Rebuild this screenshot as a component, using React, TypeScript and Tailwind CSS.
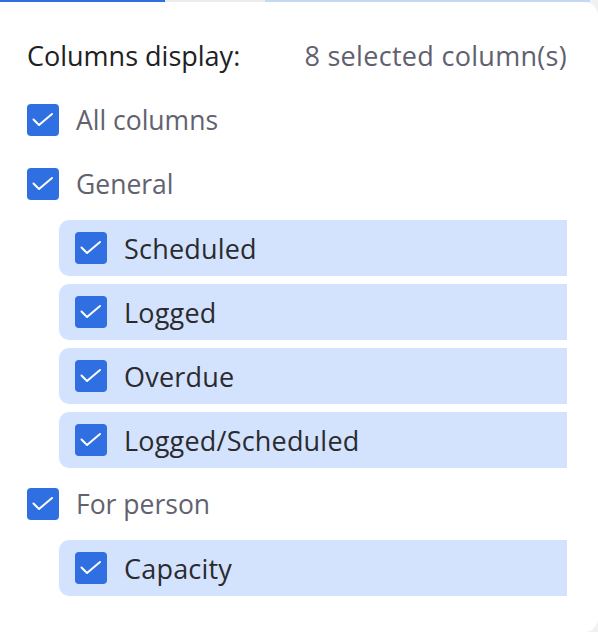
import React from "react";

const font = { fontFamily: "'Open Sans', Roboto, sans-serif" };

function Box() {
  return (
    <div className="relative h-8 w-8 shrink-0 rounded-[4px] bg-[#2f6fe2]">
      <svg className="absolute left-0 top-0" width="32" height="32" viewBox="0 0 32 32" fill="none">
        <path d="M6.5 15.5 L12 21 L25 10" stroke="white" strokeWidth="2" strokeLinecap="round" strokeLinejoin="round" />
      </svg>
    </div>
  );
}

function TopRow({ label }: { label: string }) {
  return (
    <div className="flex h-12 items-center gap-[17px]">
      <Box />
      <span className="text-[26.5px] leading-none text-[#62626f]">{label}</span>
    </div>
  );
}

function SubRow({ label }: { label: string }) {
  return (
    <div className="ml-8 flex h-14 items-center gap-[17px] rounded-l-[10px] bg-[#d3e3fd] pl-4">
      <Box />
      <span className="text-[27px] leading-none tracking-[0.2px] text-[#2b2b2f]">{label}</span>
    </div>
  );
}

export default function App() {
  return (
    <div className="h-[632px] w-[598px] overflow-hidden bg-[#f1f1f1]" style={font}>
      <div className="flex h-[2px]">
        <div className="w-[165px] bg-[#2f6fe2]" />
        <div className="w-[100px] bg-[#ececec]" />
        <div className="w-[325px] bg-[#c5d9f7]" />
      </div>
      <div className="h-[630px] rounded-tr-[14px] rounded-br-[14px] bg-white pl-[27px] pr-[31px] pt-[38px]">
        <div className="flex h-[30px] items-center justify-between">
          <span className="text-[27px] leading-none text-[#202124]">Columns display:</span>
          <span className="text-[27px] leading-none tracking-[0.3px] text-[#5f6170]">8 selected column(s)</span>
        </div>
        <div className="mt-[26px] flex flex-col gap-4">
          <TopRow label="All columns" />
          <TopRow label="General" />
        </div>
        <div className="mt-3 flex flex-col gap-2">
          <SubRow label="Scheduled" />
          <SubRow label="Logged" />
          <SubRow label="Overdue" />
          <SubRow label="Logged/Scheduled" />
        </div>
        <div className="mt-3">
          <TopRow label="For person" />
        </div>
        <div className="mt-3">
          <SubRow label="Capacity" />
        </div>
      </div>
    </div>
  );
}
